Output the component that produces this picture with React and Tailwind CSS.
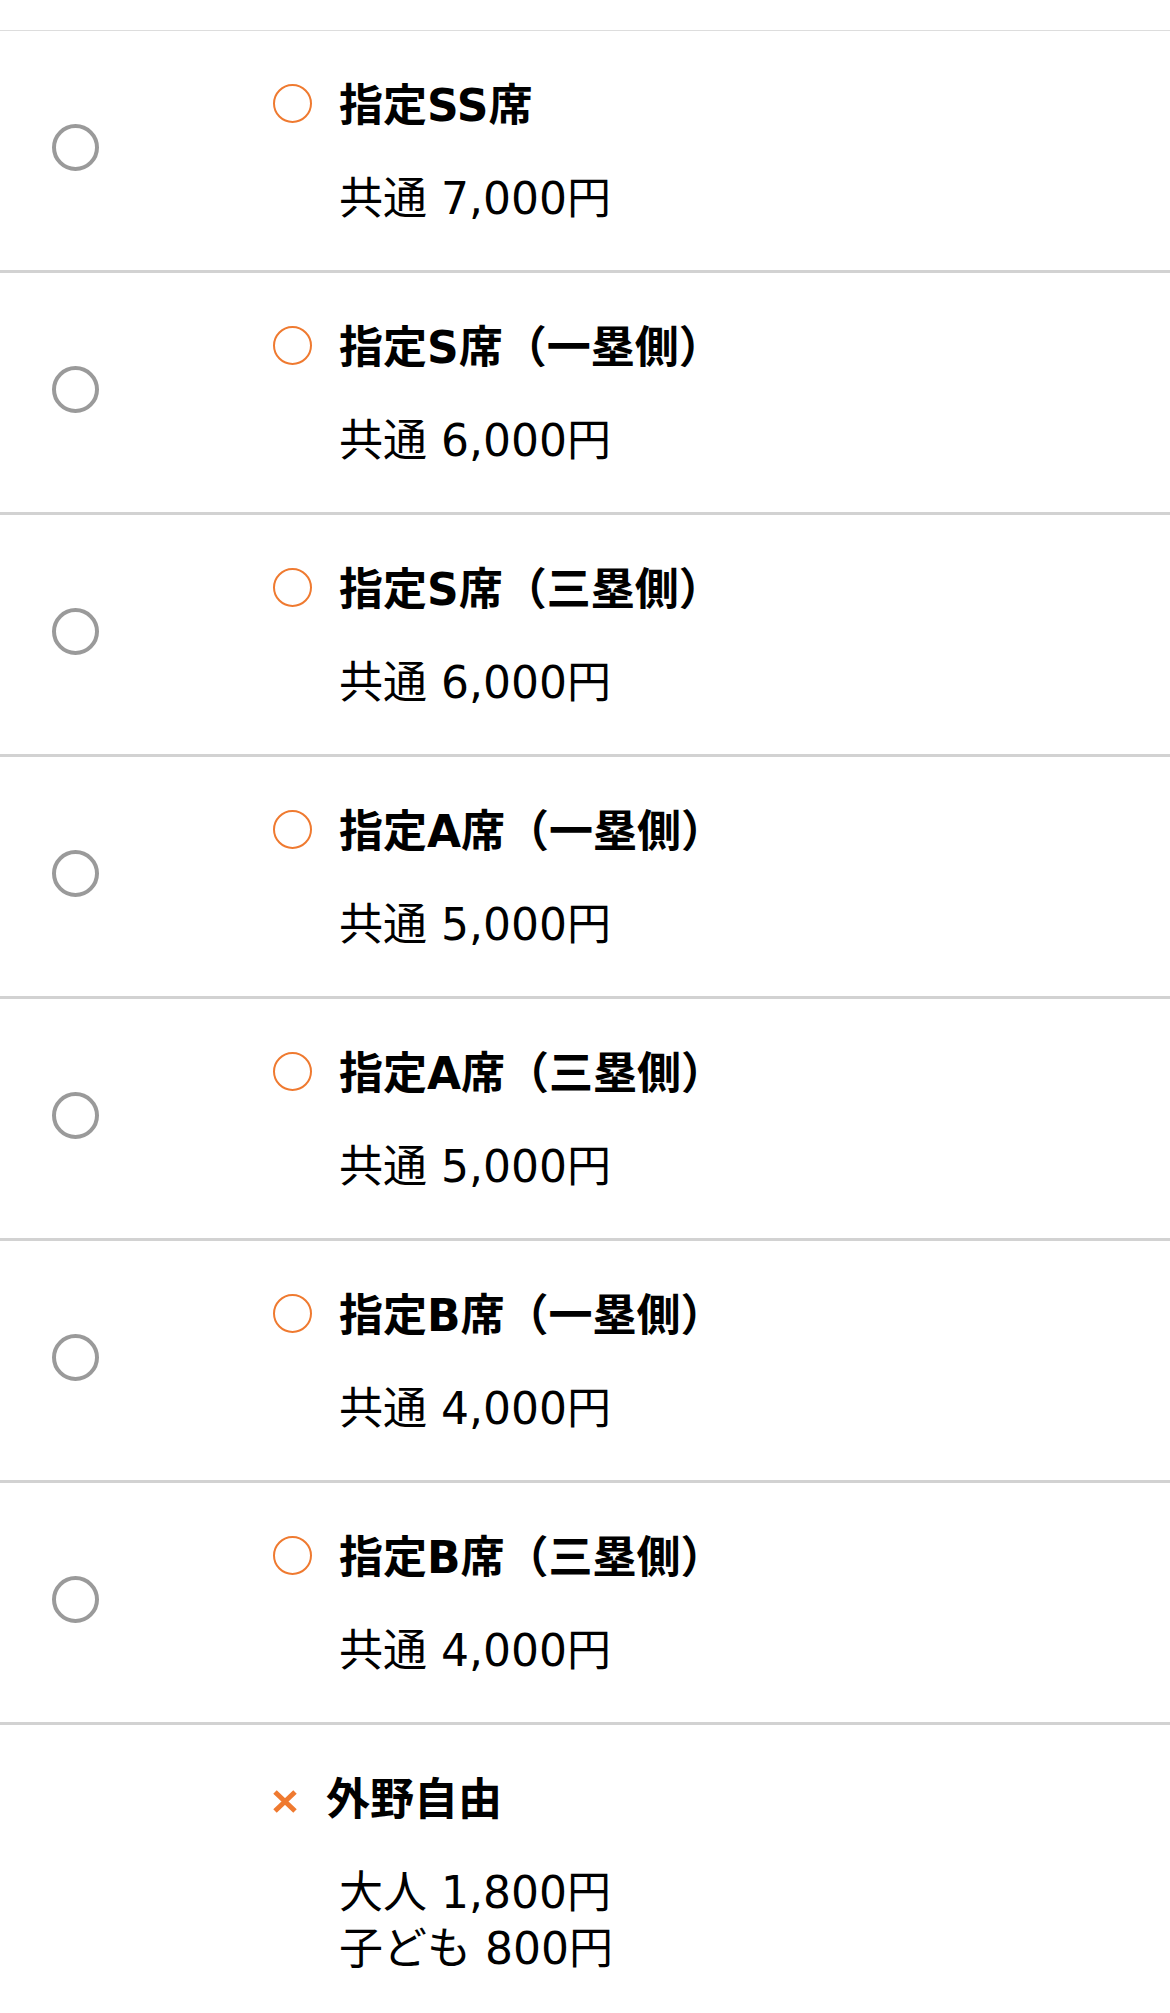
import React from "react";

const seats = [
  { name: "指定SS席", price: "共通 7,000円" },
  { name: "指定S席（一塁側）", price: "共通 6,000円" },
  { name: "指定S席（三塁側）", price: "共通 6,000円" },
  { name: "指定A席（一塁側）", price: "共通 5,000円" },
  { name: "指定A席（三塁側）", price: "共通 5,000円" },
  { name: "指定B席（一塁側）", price: "共通 4,000円" },
  { name: "指定B席（三塁側）", price: "共通 4,000円" },
];

const SeatRow = ({ seat }) => {
  return (
    <div className="flex h-[242px] border-b-[3px] border-[#d2d2d2]">
      <div className="w-[273px] shrink-0 flex items-center pl-[52px] pb-[7px]">
        <span className="block w-[47px] h-[47px] rounded-full border-[4px] border-[#9a9a9a]" />
      </div>
      <div className="pt-[43px]">
        <div className="flex items-start">
          <span className="block w-[39px] h-[39px] mt-[10px] rounded-full border-2 border-[#ef7a30] mr-[27px]" />
          <span className="block pt-[4px] text-[44px] leading-[56px] font-bold">{seat.name}</span>
        </div>
        <p className="mt-[37px] ml-[66px] text-[44px] leading-[56px]">{seat.price}</p>
      </div>
    </div>
  );
};

export default function App() {
  return (
    <div className="w-[1170px] bg-white text-black font-['DejaVu_Sans','Noto_Sans_CJK_JP',sans-serif]">
      <div className="h-[31px] border-b border-[#dddddd]" />
      {seats.map((seat) => (
        <SeatRow key={seat.name} seat={seat} />
      ))}
      <div className="flex pb-[47px]">
        <div className="w-[273px] shrink-0" />
        <div className="pt-[43px]">
          <div className="flex items-start">
            <svg
              width="24"
              height="23"
              viewBox="0 0 24 23"
              className="mt-[22px] mr-[29px]"
            >
              <path
                d="M2 2 L22 21 M22 2 L2 21"
                stroke="#ef7a30"
                strokeWidth="5"
                fill="none"
              />
            </svg>
            <span className="block pt-[4px] text-[44px] leading-[56px] font-bold">外野自由</span>
          </div>
          <div className="mt-[37px] ml-[66px] text-[44px] leading-[56px]">
            <p>大人 1,800円</p>
            <p>子ども 800円</p>
          </div>
        </div>
      </div>
    </div>
  );
}
